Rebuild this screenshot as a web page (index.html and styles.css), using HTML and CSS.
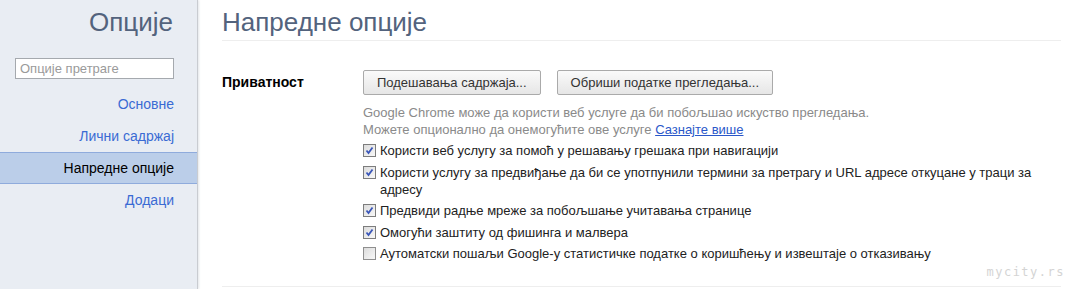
FILE: index.html
```html
<!DOCTYPE html>
<html lang="sr">
<head>
    <meta charset="UTF-8">
    <title>Опције</title>
    <link rel="stylesheet" href="styles.css">
</head>
<body>
    <div class="page">
        <div class="sidebar">
            <h1>Опције</h1>
            <div class="search"><input type="text" placeholder="Опције претраге"></div>
            <ul class="nav">
                <li><a href="#">Основне</a></li>
                <li><a href="#">Лични садржај</a></li>
                <li class="selected"><a href="#">Напредне опције</a></li>
                <li><a href="#">Додаци</a></li>
            </ul>
        </div>
        <div class="main">
            <h2>Напредне опције</h2>
            <div class="section">
                <div class="section-title">Приватност</div>
                <div class="section-body">
                    <div class="buttons">
                        <button type="button">Подешавања садржаја...</button>
                        <button type="button">Обриши податке прегледања...</button>
                    </div>
                    <p class="note">Google Chrome може да користи веб услуге да би побољшао искуство прегледања.<br>
                        Можете опционално да онемогућите ове услуге <a href="#">Сазнајте више</a></p>
                    <label class="check">
                        <span class="box checked"><svg viewBox="0 0 9 9"><path d="M1.5 4.5 L3.5 7 L7.5 1.5" /></svg></span>
                        <span>Користи веб услугу за помоћ у решавању грешака при навигацији</span>
                    </label>
                    <label class="check">
                        <span class="box checked"><svg viewBox="0 0 9 9"><path d="M1.5 4.5 L3.5 7 L7.5 1.5" /></svg></span>
                        <span>Користи услугу за предвиђање да би се употпунили термини за претрагу и URL адресе откуцане у траци за адресу</span>
                    </label>
                    <label class="check">
                        <span class="box checked"><svg viewBox="0 0 9 9"><path d="M1.5 4.5 L3.5 7 L7.5 1.5" /></svg></span>
                        <span>Предвиди радње мреже за побољшање учитавања странице</span>
                    </label>
                    <label class="check">
                        <span class="box checked"><svg viewBox="0 0 9 9"><path d="M1.5 4.5 L3.5 7 L7.5 1.5" /></svg></span>
                        <span>Омогући заштиту од фишинга и малвера</span>
                    </label>
                    <label class="check">
                        <span class="box"></span>
                        <span>Аутоматски пошаљи Google-у статистичке податке о коришћењу и извештаје о отказивању</span>
                    </label>
                </div>
            </div>
            <div class="bottom-line"></div>
        </div>
    </div>
    <div class="watermark">mycity.rs</div>
</body>
</html>
```

FILE: styles.css
```css
body {
    margin: 0;
    font-family: "Liberation Sans", Arial, sans-serif;
    font-size: 13px;
    color: #000;
    background: #fff;
}
.page {
    display: flex;
    height: 289px;
    overflow: hidden;
}
.sidebar {
    width: 197px;
    flex-shrink: 0;
    background: #e9edf3;
    border-right: 1px solid #c9ccd1;
    box-shadow: 1px 0 2px #e4e6ea;
}
.sidebar h1 {
    margin: 0;
    padding: 7px 24px 0 0;
    height: 36px;
    text-align: right;
    font-size: 26px;
    font-weight: normal;
    color: #53637d;
}
.search {
    padding: 15px 23px 0 15px;
}
.search input {
    box-sizing: border-box;
    width: 159px;
    height: 21px;
    margin: 0;
    padding: 0 4px;
    border: 1px solid #a5a9ae;
    font-family: inherit;
    font-size: 13px;
}
.search input::placeholder {
    color: #9a9a9a;
}
.nav {
    list-style: none;
    margin: 9px 0 0;
    padding: 0;
}
.nav li {
    height: 30px;
    line-height: 30px;
    padding-right: 23px;
    text-align: right;
    border-top: 1px solid transparent;
    border-bottom: 1px solid transparent;
}
.nav li a {
    color: #3a6bd3;
    text-decoration: none;
    font-size: 14px;
}
.nav li.selected {
    background: #bbcee9;
    border-color: #8fabdc;
}
.nav li.selected a {
    color: #000;
}
.main {
    flex: 1;
    padding: 0 14px 0 24px;
}
.main h2 {
    margin: 0;
    padding-top: 7px;
    height: 33px;
    font-size: 26px;
    font-weight: normal;
    color: #53637d;
    border-bottom: 1px solid #eeeeee;
}
.section {
    display: flex;
    padding-top: 29px;
}
.section-title {
    width: 141px;
    flex-shrink: 0;
    font-weight: bold;
    font-size: 14px;
    padding-top: 4px;
}
.section-body {
    flex: 1;
}
.buttons {
    display: flex;
    gap: 16px;
}
.buttons button {
    height: 25px;
    padding: 0 13px;
    border: 1px solid #aaa;
    border-radius: 2px;
    background: linear-gradient(#fafafa, #e6e6e6);
    font-family: inherit;
    font-size: 13px;
    color: #333;
}
.note {
    margin: 9px 0 4px;
    color: #8a8a8a;
    line-height: 17px;
}
.note a {
    color: #2a57c9;
}
.check {
    display: flex;
    align-items: flex-start;
    line-height: 17px;
    margin-bottom: 4.6px;
    color: #222;
}
.box {
    box-sizing: border-box;
    width: 13px;
    height: 13px;
    margin: 2px 4px 0 0;
    flex-shrink: 0;
    border: 1px solid #8f8f8f;
    background: linear-gradient(135deg, #dcdcdc, #f8f8f8);
    display: flex;
    align-items: center;
    justify-content: center;
}
.box.checked {
    border-color: #7d7d7d;
}
.box svg {
    width: 9px;
    height: 9px;
    fill: none;
    stroke: #3a56b8;
    stroke-width: 1.8;
}
.bottom-line {
    margin-top: 19px;
    border-top: 1px solid #eeeeee;
}
.watermark {
    position: absolute;
    right: 10px;
    top: 265px;
    font-family: "DejaVu Sans Mono", monospace;
    font-size: 12px;
    color: #d4d4d4;
    letter-spacing: 1.5px;
}
```
